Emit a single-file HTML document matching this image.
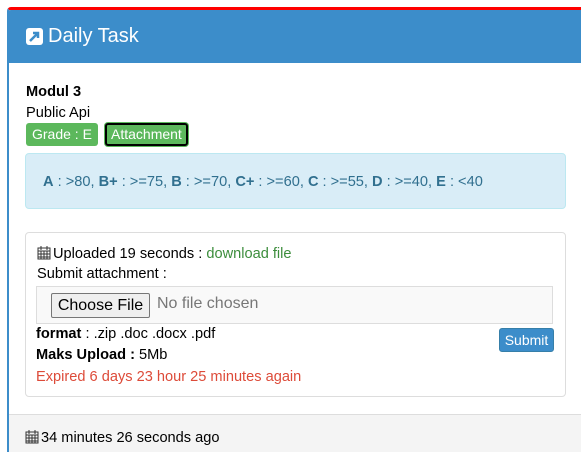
<!DOCTYPE html>
<html style="overflow:hidden;height:452px"><head><style>
*{box-sizing:border-box}
body{margin:0;width:581px;height:452px;overflow:hidden;background:#fff;font-family:"Liberation Sans",Arial,sans-serif;font-size:14.6px;color:#000;position:relative}
.panel{position:absolute;left:7px;top:7px;width:580px;height:445px;border-top:3px solid #f00;border-left:2px solid #3c8dca;border-radius:4px 0 0 0;overflow:hidden}
.hd{position:absolute;left:0;top:0;right:0;height:53px;background:#3c8dca;color:#fff;font-size:20px}
.hd .t{position:absolute;left:39px;top:15px}
.ic{position:absolute;left:17px;top:18px;width:17px;height:17px;background:#fff;border-radius:3px}
.a{position:absolute;white-space:nowrap}
.badge{position:absolute;height:23px;line-height:23px;color:#fff;background:#5cb85c;border-radius:3px;font-size:14px;padding:0 6px}
.alert{position:absolute;left:16px;top:143px;width:541px;height:56px;background:#d9edf7;border:1px solid #bce8f1;border-radius:4px;color:#31708f;padding:20px 0 0 17px}
.well{position:absolute;left:16px;top:222px;width:541px;height:165px;border:1px solid #ddd;border-radius:4px}
.file{position:absolute;left:10px;top:53px;width:517px;height:38px;background:#f9f9f9;border:1px solid #ddd}
.btn{position:absolute;left:14px;top:6px;width:99px;height:25px;border:1px solid #767676;background:#efefef;border-radius:2px;font-size:16px;text-align:center;line-height:23px}
.foot{position:absolute;left:0;top:404px;right:0;height:60px;background:#f4f4f4;border-top:1px solid #ddd}
.cal{display:inline-block;vertical-align:-2px;margin-right:2px}
</style></head><body>
<div class="panel">
<div class="hd"><div class="ic"><svg width="17" height="17"><path d="M4 13L12 5M7 5h5v5" stroke="#3c8dca" stroke-width="2.5" fill="none"/></svg></div><span class="t">Daily Task</span></div>
<div class="a" style="left:17px;top:74px;font-weight:bold">Modul 3</div>
<div class="a" style="left:17px;top:95px">Public Api</div>
<div class="badge" style="left:17px;top:113px">Grade : E</div>
<div class="badge" style="left:96px;top:113px;border:2px solid #000;box-shadow:0 0 0 1px #5cb85c;line-height:19px;padding:0 4px">Attachment</div>
<div class="alert"><b>A</b> : &gt;80, <b>B+</b> : &gt;=75, <b>B</b> : &gt;=70, <b>C+</b> : &gt;=60, <b>C</b> : &gt;=55, <b>D</b> : &gt;=40, <b>E</b> : &lt;40</div>
<div class="well">
<div class="a" style="left:11px;top:12px"><svg class="cal" width="14" height="15"><rect x="1" y="3" width="12" height="11" fill="none" stroke="#333"/><path d="M1 6h12M4 1v4M10 1v4M1 9h12M1 12h12M4 6v8M7 6v8M10 6v8" stroke="#333"/></svg>Uploaded 19 seconds : <span style="color:#3c8d3c">download file</span></div>
<div class="a" style="left:11px;top:33px">Submit attachment :</div>
<div class="file"><div class="btn">Choose File</div><span class="a" style="left:120px;top:8px;font-size:16px;color:#777">No file chosen</span></div>
<div class="a" style="left:10px;top:93px"><b>format</b> : .zip .doc .docx .pdf</div>
<div class="a" style="left:10px;top:114px"><b>Maks Upload :</b> 5Mb</div>
<div class="a" style="left:10px;top:136px;color:#dd4b39">Expired 6 days 23 hour 25 minutes again</div>
<div class="a" style="left:473px;top:95px;width:55px;height:24px;background:#3c8dca;border:1px solid #367fa9;border-radius:3px;color:#fff;text-align:center;line-height:22px;font-size:14px">Submit</div>
</div>
<div class="foot"><div class="a" style="left:16px;top:14px"><svg class="cal" width="14" height="15"><rect x="1" y="3" width="12" height="11" fill="none" stroke="#333"/><path d="M1 6h12M4 1v4M10 1v4M1 9h12M1 12h12M4 6v8M7 6v8M10 6v8" stroke="#333"/></svg>34 minutes 26 seconds ago</div></div>
</div>
</body></html>
